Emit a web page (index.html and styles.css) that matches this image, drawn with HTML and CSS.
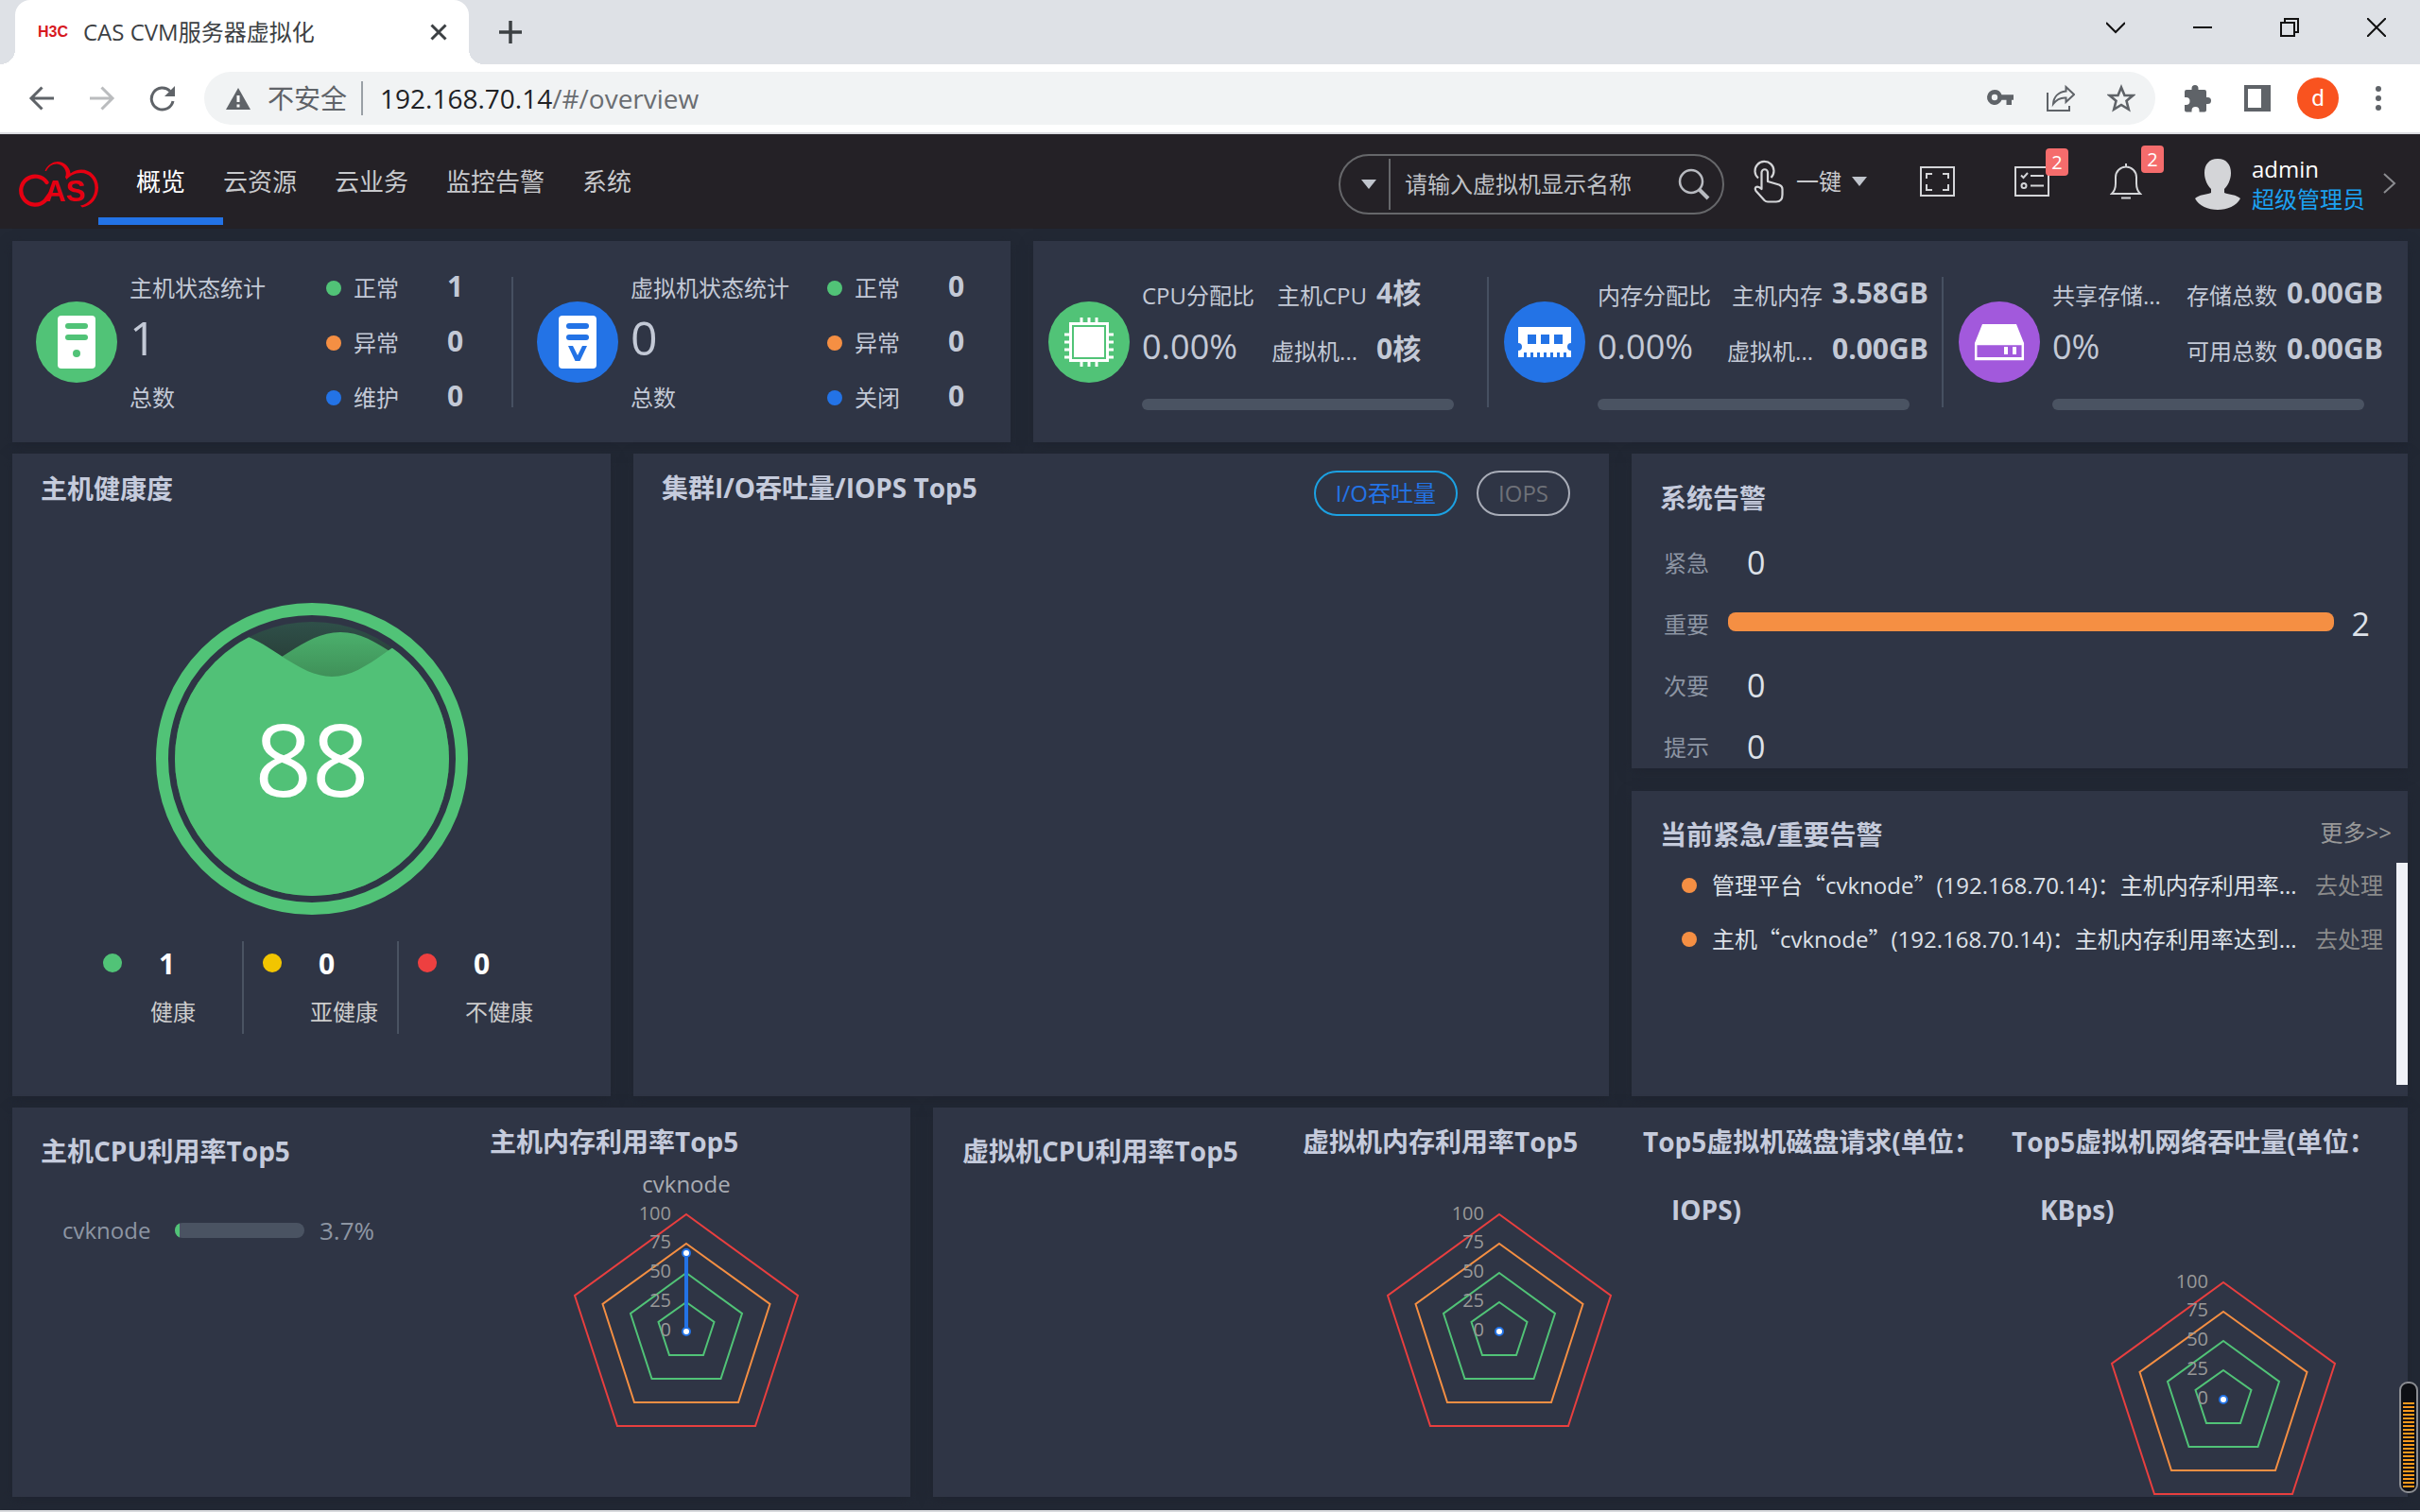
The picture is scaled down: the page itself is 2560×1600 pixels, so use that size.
FILE: index.html
```html
<!DOCTYPE html>
<html lang="zh-CN">
<head>
<meta charset="utf-8">
<title>CAS CVM服务器虚拟化</title>
<link rel="stylesheet" href="styles.css">
</head>
<body>
<div class="tabstrip">
  <div class="tab">
    <span class="favicon">H3C</span>
    <span class="tab-title">CAS CVM服务器虚拟化</span>
    <button class="icon-btn tab-close" aria-label="关闭标签页"><svg width="18" height="18" viewBox="0 0 18 18" stroke="#3c4043" stroke-width="3"><path d="M1.500 1.500L16.500 16.500M16.500 1.500L1.500 16.500"/></svg></button>
  </div>
  <button class="icon-btn new-tab" aria-label="新标签页"><svg width="24" height="24" viewBox="0 0 24 24" stroke="#3c4043" stroke-width="3.500"><path d="M12 0V24M0 12H24"/></svg></button>
  <div class="window-controls">
    <button class="icon-btn" aria-label="搜索标签页"><svg width="20" height="20" viewBox="0 0 20 20" fill="none" stroke="#111" stroke-width="2"><path d="M0 5L10 15L20 5"/></svg></button>
    <button class="icon-btn" aria-label="最小化"><svg width="20" height="20" viewBox="0 0 20 20" stroke="#111" stroke-width="2"><path d="M0 10H20"/></svg></button>
    <button class="icon-btn" aria-label="还原"><svg width="20" height="20" viewBox="0 0 20 20" fill="none" stroke="#111" stroke-width="2"><path d="M1 5H15V19H1ZM5 5V1H19V15H15"/></svg></button>
    <button class="icon-btn" aria-label="关闭"><svg width="20" height="20" viewBox="0 0 20 20" stroke="#111" stroke-width="2"><path d="M0 0L20 20M20 0L0 20"/></svg></button>
  </div>
</div>
<div class="toolbar">
  <div class="history">
    <button class="icon-btn" aria-label="后退"><svg width="28" height="28" viewBox="0 0 28 28" fill="none" stroke="#5f6368" stroke-width="3"><path d="M27 14H3M14.500 2.500L3 14L14.500 25.500"/></svg></button>
    <button class="icon-btn" aria-label="前进"><svg width="28" height="28" viewBox="0 0 28 28" fill="none" stroke="#babcbe" stroke-width="3"><path d="M1 14H25M13.500 2.500L25 14L13.500 25.500"/></svg></button>
    <button class="icon-btn" aria-label="重新加载"><svg width="28" height="28" viewBox="0 0 28 28" fill="none" stroke="#5f6368" stroke-width="3"><path d="M25 17A11.500 11.500 0 1 1 22 6.500"/><path d="M27 1V12H16Z" fill="#5f6368" stroke="none"/></svg></button>
  </div>
  <div class="omnibox">
    <svg width="26" height="23" viewBox="0 0 26 23"><path d="M13 0L26 23H0Z" fill="#5f6368"/><path d="M13 8V15M13 17.500V20.500" stroke="#fff" stroke-width="3"/></svg>
    <span class="insecure">不安全</span>
    <span class="url"><span class="host">192.168.70.14</span>/#/overview</span>
    <div class="omni-actions">
      <button class="icon-btn" aria-label="密码"><svg width="30" height="30" viewBox="0 0 30 30" fill="#5f6368"><path fill-rule="evenodd" d="M9 6a8 8 0 0 1 7.500 5.200H29v5.600h-2V22h-5.500v-5.200h-5A8 8 0 1 1 9 6Zm0 4.800a3.200 3.200 0 1 0 0 6.400a3.200 3.200 0 0 0 0-6.400Z"/></svg></button>
      <button class="icon-btn" aria-label="分享"><svg width="30" height="30" viewBox="0 0 30 30" fill="none" stroke="#5f6368" stroke-width="2"><path d="M1 9V28H24V23"/><path d="M20.500 3L29 11L20.500 19V14.500C14 14 10 17 7 21C7.500 14 12 8.500 20.500 7.500Z"/></svg></button>
      <button class="icon-btn" aria-label="收藏"><svg width="30" height="30" viewBox="0 0 30 30" fill="none" stroke="#5f6368" stroke-width="2.600"><path d="M15 3.500L18.500 12H27.300L20.500 17.800L22.800 26.800L15 22L7.200 26.800L9.500 17.800L2.700 12H11.500Z"/></svg></button>
    </div>
  </div>
  <button class="icon-btn ext" aria-label="扩展程序"><svg width="30" height="30" viewBox="0 0 30 30" fill="#5f6368"><path d="M3 6H8.500V4.500a3.500 3.500 0 0 1 7 0V6H22a2 2 0 0 1 2 2v6h1.500a3.500 3.500 0 0 1 0 7H24v6.500a2 2 0 0 1-2 2H16.500V28a4 4 0 0 0-8 0v1.500H3a2 2 0 0 1-2-2V22h1.500a4 4 0 0 0 0-8H1V8a2 2 0 0 1 2-2Z"/></svg></button>
  <button class="icon-btn panel-btn" aria-label="侧边栏"><svg width="28" height="28" viewBox="0 0 28 28"><path fill="#5f6368" d="M0 0H28V28H0Z"/><path fill="#fff" d="M4 4H18V24H4Z"/></svg></button>
  <button class="profile" aria-label="用户">d</button>
  <button class="icon-btn menu-btn" aria-label="菜单"><svg width="6" height="28" viewBox="0 0 6 28" fill="#5f6368"><circle cx="3" cy="4" r="3"/><circle cx="3" cy="14" r="3"/><circle cx="3" cy="24" r="3"/></svg></button>
</div>

<header class="header">
  <svg class="logo" width="84" height="52" viewBox="0 0 84 52" fill="none" stroke="#e60012">
    <path stroke-width="4.200" stroke-linecap="round" d="M29.500 24A15 15 0 1 0 27.500 43.500L33 36"/>
    <path fill="#e60012" stroke="none" d="M27.500 12C30 5 37 2 41 2C48 2 54 8 54.500 14.500C58 12 62 10.500 66 10.500C76 10.500 84 18.500 84 29.500C84 40 77 49 67 50.500L65 48.500C74 47 80.500 39 80.500 30C80.500 20.500 74 14 65.500 14C59 14 54 17 50.500 21L49 18.500C52 13 47 4.800 40 4.500C35 4.500 31 7.500 29 12Z"/>
    <text class="logo-text" x="27" y="44" fill="#e60012" stroke="none">AS</text>
  </svg>
  <nav class="nav">
    <a class="active" href="#overview">概览</a>
    <a href="#resource">云资源</a>
    <a href="#service">云业务</a>
    <a href="#monitor">监控告警</a>
    <a href="#system">系统</a>
  </nav>
  <form class="search">
    <button type="button" class="search-type" aria-label="搜索类型"><svg width="16" height="10" viewBox="0 0 16 10" fill="#c0c4cc"><path d="M0 0H16L8 10Z"/></svg></button>
    <input type="text" aria-label="搜索" placeholder="请输入虚拟机显示名称">
    <button type="button" class="search-go" aria-label="查询"><svg width="34" height="34" viewBox="0 0 34 34" fill="none" stroke="#b8bac0"><circle cx="14" cy="14" r="12" stroke-width="2.500"/><path d="M22.500 22.500L32 32" stroke-width="4"/></svg></button>
  </form>
  <button class="quick">
    <svg width="32" height="46" viewBox="0 0 32 46" fill="none" stroke="#d4d5d8" stroke-width="2.200" stroke-linejoin="round"><path d="M5 19.500A10 10 0 1 1 18.500 19"/><path d="M8.500 31V13.500a3.200 3.200 0 0 1 6.500 0V23L27 26.500Q30.500 28 30.500 31V37Q30.500 44.500 24 44.500H15Q13 44.500 11.500 43L2.500 33Q1 30.500 2.500 29Q5 27.500 8.500 31Z"/></svg>
    <span>一键</span>
    <svg class="quick-caret" width="16" height="10" viewBox="0 0 16 10" fill="#c0c4cc"><path d="M0 0H16L8 10Z"/></svg>
  </button>
  <button class="tool fullscreen" aria-label="全屏"><svg width="37" height="32" viewBox="0 0 37 32" fill="none" stroke="#d4d5d8" stroke-width="2"><path d="M1 1H36V31H1Z"/><path d="M7 13V8H13M24 8H30V13M7 19V25H13M24 25H30V19"/></svg></button>
  <button class="tool tasks" aria-label="任务"><svg width="37" height="32" viewBox="0 0 37 32" fill="none" stroke="#d4d5d8" stroke-width="2"><path d="M1 1H36V31H1Z"/><path d="M7 9.500L9.500 12L14 7M17 10H31M17 20.500H31"/><circle cx="10" cy="20.500" r="2.500"/></svg><span class="badge">2</span></button>
  <button class="tool bell" aria-label="告警"><svg width="34" height="38" viewBox="0 0 34 38" fill="none" stroke="#d4d5d8" stroke-width="2"><path d="M17 0V4M2 32Q6 28 6 21V14.500a11 11 0 0 1 22 0V21Q28 28 32 32ZM12 36.500H22"/></svg><span class="badge">2</span></button>
  <svg class="avatar" width="48" height="54" viewBox="0 0 48 54" fill="#d4d5d8"><path d="M24 0C33 0 38 6 38 15C38 23 34 29 31 32V36C36 38 44 38 48 42C44 50 34 54 24 54S4 50 0 42C4 38 12 38 17 36V32C14 29 10 23 10 15C10 6 15 0 24 0Z"/></svg>
  <div class="user"><span>admin</span><a href="#role">超级管理员</a></div>
  <svg class="more-arrow" width="14" height="22" viewBox="0 0 14 22" fill="none" stroke="#8b8c90" stroke-width="2"><path d="M1 1L12 11L1 21"/></svg>
</header>

<main class="main">
  <div class="row row-stats">
    <section class="card stats">
      <div class="stat">
        <svg class="disc" viewBox="0 0 86 86"><circle cx="43" cy="43" r="43" fill="#51c377"/><rect x="23" y="15" width="40" height="56" rx="4" fill="#fff"/><g fill="#51c377"><rect x="31" y="23" width="24" height="6" rx="3"/><rect x="31" y="35" width="24" height="6" rx="3"/><circle cx="43" cy="55" r="4"/></g></svg>
        <div class="stat-total"><span>主机状态统计</span><strong>1</strong><span>总数</span></div>
        <ul class="legend">
          <li><i class="dot green"></i><span>正常</span><b>1</b></li>
          <li><i class="dot orange"></i><span>异常</span><b>0</b></li>
          <li><i class="dot blue"></i><span>维护</span><b>0</b></li>
        </ul>
      </div>
      <div class="stat">
        <svg class="disc" viewBox="0 0 86 86"><circle cx="43" cy="43" r="43" fill="#2373e6"/><rect x="23" y="15" width="40" height="56" rx="4" fill="#fff"/><g fill="#2373e6"><rect x="31" y="23" width="24" height="6" rx="3"/><rect x="31" y="35" width="24" height="6" rx="3"/><path d="M33 47H38L43 57L48 47H53L45.500 63H40.500Z"/></g></svg>
        <div class="stat-total"><span>虚拟机状态统计</span><strong>0</strong><span>总数</span></div>
        <ul class="legend">
          <li><i class="dot green"></i><span>正常</span><b>0</b></li>
          <li><i class="dot orange"></i><span>异常</span><b>0</b></li>
          <li><i class="dot blue"></i><span>关闭</span><b>0</b></li>
        </ul>
      </div>
    </section>
    <section class="card resources">
      <div class="resource">
        <svg class="disc" viewBox="0 0 86 86"><circle cx="43" cy="43" r="43" fill="#51c377"/><path d="M35 17V69M43 17V69M51 17V69M17 35H69M17 43H69M17 51H69M17 59H69M17 27" stroke="#fff" stroke-width="3"/><rect x="22" y="22" width="42" height="42" fill="#fff"/><rect x="26" y="26" width="34" height="34" fill="none" stroke="#51c377" stroke-width="2"/></svg>
        <div class="resource-body">
          <span class="r-name">CPU分配比</span><span class="r-label">主机CPU</span><b>4核</b>
          <span class="r-pct">0.00%</span><span class="r-label clipped">虚拟机...</span><b>0核</b>
          <div class="track"></div>
        </div>
      </div>
      <div class="resource">
        <svg class="disc" viewBox="0 0 86 86"><circle cx="43" cy="43" r="43" fill="#2373e6"/><path fill="#fff" d="M15 27H71V44a4 4 0 0 0 0 8V59H66V54H63V59H59V54H56V59H52V54H49V59H45V54H42V59H38V54H35V59H31V54H28V59H24V54H21V59H15V52a4 4 0 0 0 0-8Z"/><path fill="#2373e6" d="M25 35H34V45H25ZM39 35H48V45H39ZM53 35H62V45H53Z"/></svg>
        <div class="resource-body">
          <span class="r-name">内存分配比</span><span class="r-label">主机内存</span><b>3.58GB</b>
          <span class="r-pct">0.00%</span><span class="r-label clipped">虚拟机...</span><b>0.00GB</b>
          <div class="track"></div>
        </div>
      </div>
      <div class="resource">
        <svg class="disc" viewBox="0 0 86 86"><circle cx="43" cy="43" r="43" fill="#a259dc"/><path fill="#fff" d="M25 24H61L69 44H17Z"/><path fill="none" stroke="#fff" stroke-width="2.500" d="M18.200 45H67.800V61H18.200Z"/><path fill="#fff" d="M48 48H52V56H48ZM57 48H61V56H57ZM17 59H69V62H17Z"/></svg>
        <div class="resource-body">
          <span class="r-name">共享存储...</span><span class="r-label">存储总数</span><b>0.00GB</b>
          <span class="r-pct">0%</span><span class="r-label">可用总数</span><b>0.00GB</b>
          <div class="track"></div>
        </div>
      </div>
    </section>
  </div>

  <div class="row row-mid">
    <section class="card health">
      <h2>主机健康度</h2>
      <svg class="gauge" width="330" height="330" viewBox="0 0 330 330">
        <defs>
          <clipPath id="bowl"><circle cx="165" cy="165" r="145"/></clipPath>
          <linearGradient id="shade" x1="0" y1="20" x2="0" y2="60" gradientUnits="userSpaceOnUse"><stop offset="0" stop-color="#2f5049"/><stop offset="1" stop-color="#29403a"/></linearGradient>
          <linearGradient id="back" x1="0" y1="31" x2="0" y2="80" gradientUnits="userSpaceOnUse"><stop offset="0" stop-color="#4bb06c"/><stop offset="1" stop-color="#3f8f58"/></linearGradient>
        </defs>
        <circle cx="165" cy="165" r="158.500" fill="none" stroke="#51c377" stroke-width="13"/>
        <g clip-path="url(#bowl)">
          <rect width="330" height="330" fill="url(#shade)"/>
          <path fill="url(#back)" d="M-37 31C6 31 36 78 79 78C122 78 152 31 195 31C238 31 267 78 310 78V330H-37Z"/>
          <path fill="#51c177" d="M-30 78C10 78 34 31 74 31C114 31 146 78 186 78C226 78 254 31 294 31L330 40V330H-30Z"/>
        </g>
        <text class="gauge-value" x="165" y="205" text-anchor="middle">88</text>
      </svg>
      <ul class="health-legend">
        <li><i class="dot large green"></i><div><b>1</b><span>健康</span></div></li>
        <li><i class="dot large yellow"></i><div><b>0</b><span>亚健康</span></div></li>
        <li><i class="dot large red"></i><div><b>0</b><span>不健康</span></div></li>
      </ul>
    </section>
    <section class="card cluster">
      <h2>集群I/O吞吐量/IOPS Top5</h2>
      <div class="switch"><button class="on">I/O吞吐量</button><button>IOPS</button></div>
    </section>
    <div class="side">
      <section class="card alarms">
        <h2>系统告警</h2>
        <ul>
          <li><span>紧急</span><b>0</b></li>
          <li class="filled"><span>重要</span><i class="alarm-bar"></i><b>2</b></li>
          <li><span>次要</span><b>0</b></li>
          <li><span>提示</span><b>0</b></li>
        </ul>
      </section>
      <section class="card current">
        <div class="current-head"><h2>当前紧急/重要告警</h2><a href="#more">更多&gt;&gt;</a></div>
        <div class="current-body">
          <ul>
            <li><i class="dot orange"></i><span>管理平台<q>“</q>cvknode<q>”</q>(192.168.70.14)：主机内存利用率...</span><a href="#h1">去处理</a></li>
            <li><i class="dot orange"></i><span>主机<q>“</q>cvknode<q>”</q>(192.168.70.14)：主机内存利用率达到...</span><a href="#h2">去处理</a></li>
          </ul>
          <div class="scroll-thumb"></div>
        </div>
      </section>
    </div>
  </div>

  <div class="row row-top5">
    <section class="card host-top">
      <div class="col">
        <h2 class="low">主机CPU利用率Top5</h2>
        <div class="usage"><span class="usage-name">cvknode</span><div class="usage-track"><div class="usage-fill" style="width:3.7%"></div></div><span class="usage-value">3.7%</span></div>
      </div>
      <div class="col">
        <h2>主机内存利用率Top5</h2>
        <svg class="radar" width="240" height="306" viewBox="-120 -180 240 306">
          <g fill="none" stroke-width="2"><path stroke="#e83f3f" d="M0-124L118-38L73 100H-73L-118-38Z"/><path stroke="#f58f43" d="M0-93L88.500-29L55 75H-55L-88.500-29Z"/><path stroke="#51c377" d="M0-62L59-19L36.500 50H-36.500L-59-19ZM0-31L29.500-10L18 25H-18L-29.500-10Z"/></g>
          <g class="ticks" text-anchor="end"><text x="-16" y="-118">100</text><text x="-16" y="-88">75</text><text x="-16" y="-57">50</text><text x="-16" y="-26">25</text><text x="-16" y="5">0</text></g>
          <text class="axis-name" x="0" y="-147" text-anchor="middle">cvknode</text>
          <path d="M0 0V-83" stroke="#2373e6" stroke-width="4"/>
          <g fill="#fff" stroke="#2373e6" stroke-width="2"><circle r="4"/><circle cy="-83" r="4"/></g>
        </svg>
      </div>
    </section>
    <section class="card vm-top">
      <div class="col"><h2 class="low">虚拟机CPU利用率Top5</h2></div>
      <div class="col">
        <h2>虚拟机内存利用率Top5</h2>
        <svg class="radar" width="240" height="306" viewBox="-120 -180 240 306">
          <g fill="none" stroke-width="2"><path stroke="#e83f3f" d="M0-124L118-38L73 100H-73L-118-38Z"/><path stroke="#f58f43" d="M0-93L88.500-29L55 75H-55L-88.500-29Z"/><path stroke="#51c377" d="M0-62L59-19L36.500 50H-36.500L-59-19ZM0-31L29.500-10L18 25H-18L-29.500-10Z"/></g>
          <g class="ticks" text-anchor="end"><text x="-16" y="-118">100</text><text x="-16" y="-88">75</text><text x="-16" y="-57">50</text><text x="-16" y="-26">25</text><text x="-16" y="5">0</text></g>
          <circle r="4" fill="#fff" stroke="#2373e6" stroke-width="2"/>
        </svg>
      </div>
      <div class="col"><h2>Top5虚拟机磁盘请求(单位：<br><span class="unit">IOPS)</span></h2></div>
      <div class="col last">
        <h2>Top5虚拟机网络吞吐量(单位：<br><span class="unit">KBps)</span></h2>
        <svg class="radar" width="240" height="282" viewBox="-120 -180 240 282">
          <g fill="none" stroke-width="2"><path stroke="#e83f3f" d="M0-124L118-38L73 100H-73L-118-38Z"/><path stroke="#f58f43" d="M0-93L88.500-29L55 75H-55L-88.500-29Z"/><path stroke="#51c377" d="M0-62L59-19L36.500 50H-36.500L-59-19ZM0-31L29.500-10L18 25H-18L-29.500-10Z"/></g>
          <g class="ticks" text-anchor="end"><text x="-16" y="-118">100</text><text x="-16" y="-88">75</text><text x="-16" y="-57">50</text><text x="-16" y="-26">25</text><text x="-16" y="5">0</text></g>
          <circle r="4" fill="#fff" stroke="#2373e6" stroke-width="2"/>
        </svg>
      </div>
    </section>
  </div>
</main>
<div class="meter" aria-hidden="true"><div class="meter-level"></div></div>
</body>
</html>
```
FILE: styles.css
```css
* { box-sizing: border-box; }
body {
  margin: 0;
  position: relative;
  min-height: 100vh;
  background: #222834;
  border-bottom: 2px solid #d9dadd;
  color: #c3c9d6;
  font-family: "Open Sans", "Noto Sans CJK SC", sans-serif;
  font-size: 24px;
  line-height: 32px;
}
button { font: inherit; color: inherit; background: none; border: 0; padding: 0; margin: 0; }
a { color: inherit; text-decoration: none; }
ul { list-style: none; margin: 0; padding: 0; }
svg { display: block; flex: none; }
h2 { margin: 0; font-size: 28px; line-height: 36px; font-weight: 700; color: #c5cbdc; white-space: nowrap; }

/* browser chrome */
.tabstrip { display: flex; align-items: center; height: 68px; padding-left: 16px; background: #dee1e6; }
.tab {
  position: relative; display: flex; align-items: center;
  width: 480px; height: 68px; padding: 0 23px 0 24px;
  background: #fff; border-radius: 16px 16px 0 0; color: #3c4043;
}
.tab::before, .tab::after { content: ""; position: absolute; bottom: 0; width: 16px; height: 16px; }
.tab::before { left: -16px; background: radial-gradient(circle at 0 0, #dee1e6 16px, #fff 16px); }
.tab::after { right: -16px; background: radial-gradient(circle at 100% 0, #dee1e6 16px, #fff 16px); }
.favicon { width: 48px; font: 700 16px/20px "Liberation Sans", sans-serif; color: #d7191f; }
.tab-close { margin-left: auto; }
.new-tab { margin-left: 32px; }
.window-controls { display: flex; gap: 72px; margin-left: auto; padding: 0 36px 10px 0; }
.toolbar { display: flex; align-items: center; height: 74px; background: #fff; border-bottom: 2px solid #dadce0; }
.history { display: flex; gap: 36px; padding-left: 30px; }
.omnibox {
  display: flex; flex: 1; align-items: center; height: 56px; margin-left: 30px; padding: 0 21px 0 23px;
  border-radius: 28px; background: #f1f3f4; color: #5f6368; font-size: 28px; line-height: 36px;
}
.insecure { margin-left: 18px; padding-right: 15px; border-right: 2px solid #9aa0a6; }
.url { margin-left: 18px; color: #6a6d71; }
.host { color: #202124; }
.omni-actions { display: flex; gap: 34px; margin-left: auto; }
.ext { margin-left: 30px; }
.panel-btn { margin-left: 34px; }
.profile { width: 44px; height: 44px; margin-left: 28px; border-radius: 50%; background: #f9531f; color: #fff; font: 24px/44px Roboto, sans-serif; }
.menu-btn { margin: 0 41px 0 39px; }

/* console header */
.header { display: flex; align-items: center; height: 100px; padding: 0 25px 0 20px; background: #242126; color: #c8c9cc; }
.logo { margin-top: 6px; }
.logo-text { font: 700 31px "Liberation Sans", sans-serif; }
.nav { display: flex; gap: 40px; margin-left: 40px; font-size: 26px; line-height: 100px; }
.nav .active { position: relative; color: #fff; }
.nav .active::after { content: ""; position: absolute; left: -40px; right: -40px; bottom: 4px; height: 8px; background: #2373e6; }
.search {
  display: flex; align-items: center; width: 408px; height: 64px; margin: 6px 0 0 auto;
  border: 2px solid #66676a; border-radius: 32px;
}
.search-type { display: flex; align-items: center; height: 54px; padding: 0 13px 0 22px; border-right: 2px solid #66676a; }
.search input { flex: 1; min-width: 0; padding: 0 0 0 15px; border: 0; background: none; color: #c0c4cc; font: inherit; outline: 0; }
.search input::placeholder { color: #bfc1c6; opacity: 1; }
.search-go { padding-right: 13px; }
.quick { display: flex; align-items: center; margin-left: 31px; }
.quick span { margin-left: 13px; }
.quick-caret { margin-left: 11px; }
.tool { position: relative; }
.fullscreen { margin-left: 56px; }
.tasks { margin-left: 63px; }
.bell { margin-left: 64px; }
.badge {
  position: absolute; left: 33px; top: -19px; width: 24px; height: 29px;
  border-radius: 4px; background: #f56c6c; color: #fff; font-size: 20px; line-height: 29px; text-align: center;
}
.avatar { margin: 6px 0 0 56px; }
.user { display: flex; flex-direction: column; margin: 5px 0 0 12px; color: #fff; }
.user a { color: #1ca1f2; }
.more-arrow { margin: 4px 0 0 19px; }

/* dashboard grid */
.main { display: grid; gap: 12px; padding: 13px 13px 14px; }
.row { display: grid; column-gap: 24px; }
.row-stats { grid-template-columns: minmax(0, 1056fr) minmax(0, 1454fr); min-height: 213px; }
.row-mid { grid-template-columns: minmax(0, 633fr) minmax(0, 1032fr) minmax(0, 821fr); min-height: 680px; }
.row-top5 { grid-template-columns: minmax(0, 950fr) minmax(0, 1560fr); min-height: 412px; }
.card { background: #2f3545; box-shadow: 0 4px 12px #1f2430; }
.disc { width: 86px; height: 86px; }
.dot { flex: none; width: 16px; height: 16px; border-radius: 50%; }
.large { width: 20px; height: 20px; }
.green { background: #51c377; }
.orange { background: #f58f43; }
.blue { background: #2373e6; }
.yellow { background: #f2c500; }
.red { background: #ee4040; }

.stats { display: grid; grid-template-columns: 1fr 1fr; align-items: center; }
.stat { display: flex; align-items: center; height: 138px; padding-left: 25px; }
.stat + .stat, .resource + .resource { border-left: 2px solid #465061; }
.stat-total { display: grid; grid-template-rows: 58px 58px 58px; align-items: center; width: 208px; padding-top: 2px; margin-left: 13px; white-space: nowrap; }
.stat-total strong { padding-bottom: 12px; font-size: 50px; line-height: 52px; font-weight: 400; }
.legend { padding-top: 2px; }
.legend li { display: flex; align-items: center; height: 58px; }
.legend span { width: 99px; margin-left: 13px; }
.legend b, .resource b { padding-bottom: 4px; font-size: 30px; line-height: 32px; white-space: nowrap; }

.resources { display: grid; grid-template-columns: 480fr 481fr 493fr; align-items: center; }
.resource { display: flex; align-items: center; height: 138px; padding-left: 16px; }
.resource-body { display: grid; grid-template-columns: 120px 118px 92px; grid-template-rows: 54px 64px 30px; align-items: center; margin-left: 13px; padding-bottom: 4px; white-space: nowrap; }
.resource b { padding: 0 0 6px 10px; }
.r-label { text-align: right; }
.clipped { padding-right: 10px; }
.r-pct { padding-bottom: 10px; font-size: 36px; line-height: 44px; }
.track { grid-column: 1 / -1; align-self: end; height: 12px; border-radius: 6px; background: #4a5362; }

.health { padding: 19px 30px 0; }
.gauge { margin: 103px auto 0; }
.gauge-value { fill: #fff; font-size: 106px; }
.health-legend { display: flex; margin-top: 28px; padding-left: 66px; }
.health-legend li { display: flex; align-items: flex-start; height: 98px; padding: 13px 20px 0 0; }
.health-legend .dot { margin-right: 30px; }
.health-legend li + li { margin-left: 20px; }
.health-legend li:not(:last-child) { border-right: 2px solid #4a5362; }
.health-legend li:first-child { padding-right: 49px; }
.health-legend div { display: grid; gap: 24px; color: #ccc; }
.health-legend b { padding-left: 9px; font-size: 30px; line-height: 22px; color: #fff; }

.cluster { display: flex; justify-content: space-between; align-items: flex-start; padding: 18px 41px 0 30px; }
.switch { display: flex; gap: 20px; }
.switch button { height: 48px; padding: 0 21px; border: 2px solid #a9adb8; border-radius: 24px; color: #6e7178; }
.switch .on { border-color: #1ca1e2; color: #2373e6; }

.side { display: grid; grid-template-rows: 333px 1fr; gap: 24px; }
.alarms { padding: 29px 40px 0 30px; overflow: hidden; }
.alarms ul { padding: 18px 0 0 4px; }
.alarms li { display: flex; align-items: center; height: 65px; color: #8d95a3; }
.alarms b { margin-left: 40px; padding-bottom: 2px; color: #dde1e8; font-size: 34px; font-weight: 400; }
.alarm-bar { flex: 1; height: 20px; margin: 0 0 6px 20px; border-radius: 8px; background: #f58f43; }
.alarms .filled b { margin-left: 19px; }
.current { display: flex; flex-direction: column; }
.current-head { display: flex; justify-content: space-between; align-items: flex-start; padding: 28px 17px 0 30px; color: #999; }
.current-body { display: flex; flex: 1; justify-content: space-between; margin-top: 12px; padding-bottom: 12px; }
.current-body ul { padding: 0 0 0 53px; }
.current-body li { display: flex; align-items: center; height: 57px; padding-bottom: 10px; white-space: nowrap; color: #dde1e8; }
.current-body li span { width: 626px; margin-left: 16px; }
.current-body li a { margin-left: 12px; color: #8b8b8b; }
.current-body q { quotes: none; font-family: "Noto Sans CJK SC", sans-serif; }
.scroll-thumb { width: 12px; background: #f0f2f8; }

.host-top { display: grid; grid-template-columns: 475fr 445fr; padding-left: 30px; }
.vm-top { display: grid; grid-template-columns: 360fr 360fr 390fr 419fr; padding-left: 31px; }
.col h2 { line-height: 72px; }
.col .low { padding-top: 10px; }
.unit { padding-left: 30px; }
.usage { display: flex; align-items: center; margin-top: 32px; padding-left: 23px; color: #8d95a3; }
.usage-name { width: 98px; }
.usage-track { width: 137px; height: 16px; margin: 0 16px 0 21px; border-radius: 8px; background: #4a5362; overflow: hidden; }
.usage-fill { height: 100%; background: #51c377; }
.usage-value { font-size: 26px; }
.radar { margin: -15px 0 0 88px; }
.last .radar { margin-left: 104px; }
.ticks { fill: #999; font-size: 20px; }
.axis-name { fill: #a9acb3; font-size: 24px; }

.meter {
  position: absolute; right: 2px; bottom: 18px; width: 20px; height: 118px; padding: 20px 2px 4px;
  border: 2px solid #8b8d92; border-radius: 9px; background: #0d0f14;
}
.meter-level { height: 100%; background: repeating-linear-gradient(#f9991c 0 2px, #0d0f14 2px 4px); }
```
